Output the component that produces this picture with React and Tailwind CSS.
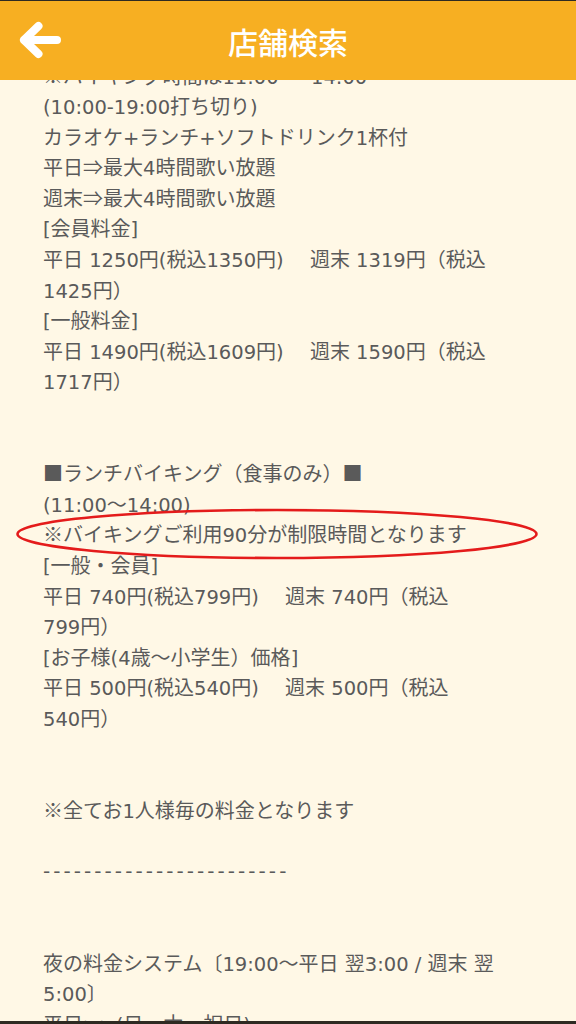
import React from "react";

const LINES = [
  "※バイキング時間は11:00 ～ 14:00",
  "(10:00-19:00打ち切り)",
  "カラオケ+ランチ+ソフトドリンク1杯付",
  "平日⇒最大4時間歌い放題",
  "週末⇒最大4時間歌い放題",
  "[会員料金]",
  "平日 1250円(税込1350円)　 週末 1319円（税込",
  "1425円）",
  "[一般料金]",
  "平日 1490円(税込1609円)　 週末 1590円（税込",
  "1717円）",
  null,
  null,
  "■ランチバイキング（食事のみ）■",
  "(11:00～14:00)",
  "ELLIPSE",
  "[一般・会員]",
  "平日 740円(税込799円)　 週末 740円（税込",
  "799円）",
  "[お子様(4歳～小学生）価格]",
  "平日 500円(税込540円)　 週末 500円（税込",
  "540円）",
  null,
  null,
  "※全てお1人様毎の料金となります",
  null,
  "DASH",
  null,
  null,
  "夜の料金システム〔19:00～平日 翌3:00 / 週末 翌",
  "5:00〕",
  "平日>>(日～木・祝日)",
];

function Rich({ text }) {
  const parts = text.split(/([\x20-\x7E]+)/);
  return parts.map((p, i) =>
    /^[\x20-\x7E]+$/.test(p) ? (
      <span key={i} className="font-['DejaVu_Sans',sans-serif] text-[19.5px]">
        {p}
      </span>
    ) : (
      <React.Fragment key={i}>{p}</React.Fragment>
    )
  );
}

function Line({ text }) {
  if (text === null) return <div className="h-[30.6px]" />;
  if (text === "ELLIPSE") {
    return (
      <div className="relative h-[30.6px] leading-[30.6px] whitespace-pre">
        <Rich text="※バイキングご利用90分が制限時間となります" />
        <svg
          className="absolute left-[-28px] top-[-11px] pointer-events-none"
          width="524"
          height="52"
          viewBox="0 0 524 52"
        >
          <ellipse cx="262" cy="26" rx="259.5" ry="24" fill="none" stroke="#e41b1b" strokeWidth="2.6" />
        </svg>
      </div>
    );
  }
  if (text === "DASH") {
    return (
      <div className="h-[30.6px] leading-[30.6px] whitespace-pre tracking-[3.05px] font-['DejaVu_Sans',sans-serif]">
        ------------------------
      </div>
    );
  }
  return (
    <div className="h-[30.6px] leading-[30.6px] whitespace-pre">
      <Rich text={text} />
    </div>
  );
}

export default function App() {
  return (
    <div
      className="w-[576px] h-[1024px] flex flex-col bg-[#FFF8E6] overflow-hidden"
      style={{ fontFamily: '"Noto Sans CJK JP", "Noto Sans", sans-serif' }}
    >
      <div className="h-[1px] shrink-0 bg-[#2e2a22]" />
      <header className="h-[79px] shrink-0 bg-[#F7AF22] grid grid-cols-[80px_1fr_80px] items-center z-10">
        <svg width="80" height="79" viewBox="0 0 80 79">
          <path
            d="M24 39 L38.5 25 M24 39 L38.5 53 M24 39 L57 39"
            fill="none"
            stroke="#ffffff"
            strokeWidth="8"
            strokeLinecap="round"
            strokeLinejoin="round"
          />
        </svg>
        <h1 className="text-center text-white text-[30px] font-medium leading-none">店舗検索</h1>
        <div />
      </header>
      <main className="flex-1 overflow-hidden pl-[43px] text-[20px] text-[#5a5a5a]">
        <div className="-mt-[19.5px]">
          {LINES.map((t, i) => (
            <Line key={i} text={t} />
          ))}
        </div>
      </main>
      <div className="h-[3px] shrink-0 bg-[#2e2a22]" />
    </div>
  );
}
